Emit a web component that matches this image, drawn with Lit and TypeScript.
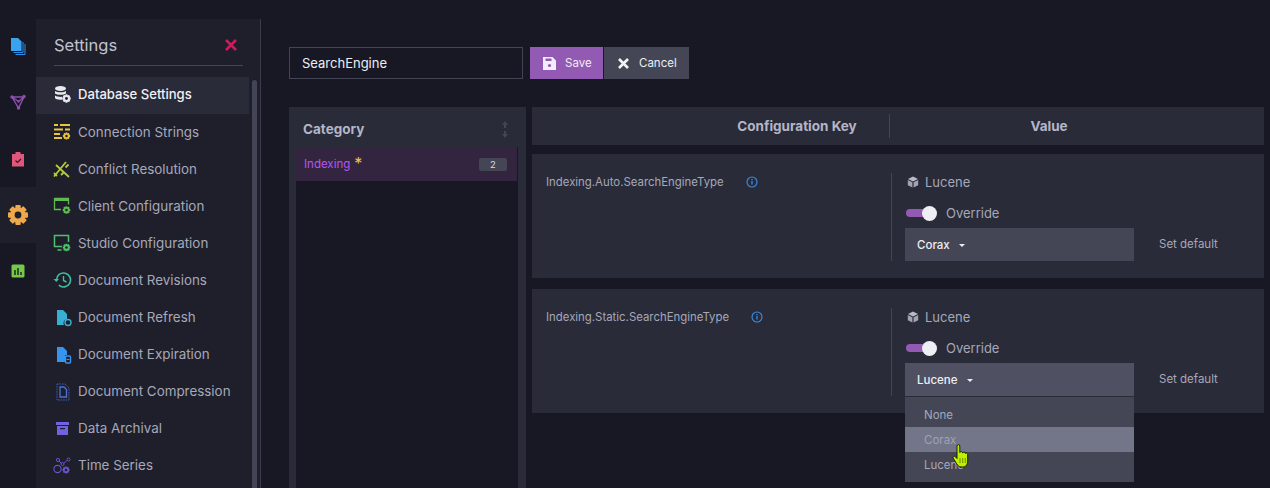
import { LitElement, html, css, svg } from 'lit';
import { customElement } from 'lit/decorators.js';

const gear = (x: number, y: number, r: number, c: string, hole = '#1e1f2b') => svg`
  <g transform="translate(${x} ${y})" fill="${c}">
    <circle r="${r * 0.76}" />
    ${[0, 45, 90, 135].map(
      (a) => svg`<rect x="${-r}" y="${-r * 0.27}" width="${r * 2}" height="${r * 0.54}" rx="${r * 0.1}" transform="rotate(${a})" />`
    )}
    <circle r="${r * 0.34}" fill="${hole}" />
  </g>`;

const railIcons = [
  svg`<path d="M6.500 17.500H16V7M8.500 19.500H18V9" fill="none" stroke="#2f8fe8" stroke-width="1"/><path d="M4 3h7l3.500 3.500V16H4z" fill="#3ba2ef"/>`,
  svg`<path d="M5 6h12l-5.500 11z M5 6l6.500 4.500 M17 6l-5.500 4.500" fill="none" stroke="#8b50ad" stroke-width="1.400"/><circle cx="5" cy="6" r="1.700" fill="#8b50ad"/><circle cx="17" cy="5.500" r="1.700" fill="#8b50ad"/><circle cx="11.500" cy="17" r="1.700" fill="#8b50ad"/><circle cx="11.500" cy="10.500" r="1.200" fill="#8b50ad"/>`,
  svg`<path d="M5 6h3.500V4h5v2H17v12.500H5z" fill="#e0577c"/><path d="M8.500 12.500l2 2 3.500-3.500" fill="none" stroke="#2a1a22" stroke-width="1.100"/>`,
  gear(11, 11, 10, '#efa94d'),
  svg`<rect x="4.500" y="4.500" width="13" height="13" rx="1.500" fill="#76c84a"/><path d="M8 10v5M11 8v7M14 12v3" stroke="#1e2a16" stroke-width="1.500"/>`,
];

const menu = [
  ['Database Settings', svg`<ellipse cx="7.500" cy="3.500" rx="5.500" ry="2.500" fill="#e8e8ee"/><path d="M2 6c2 1.800 9 1.800 11 0v2.500c-2 1.800-9 1.800-11 0zM2 10.500c2 1.500 6 1.500 7 1.300L9.500 14.500c-3 .5-7 0-7.500-1.500z" fill="#e8e8ee"/>${gear(13.500, 13.500, 4.200, '#e8e8ee')}`],
  ['Connection Strings', svg`<path d="M1 3h4M7 3h10M1 7.500h9M12 7.500h5M1 12h6M1 16h8" stroke="#e8c53c" stroke-width="1.800"/>${gear(13.500, 14, 3.600, '#e8c53c')}`],
  ['Conflict Resolution', svg`<path d="M1 17.500L13 3M3 6l13 12M11 13l-3 3M1 14l3 3M12.500 8.500l3 -3" stroke="#b5cb3a" stroke-width="1.800" fill="none"/>`],
  ['Client Configuration', svg`<path d="M1.500 2.500h14v6M1.500 2.500V13.500H8" fill="none" stroke="#5fbb4f" stroke-width="1.300"/><rect x="1" y="2" width="15" height="3" fill="#5fbb4f"/>${gear(13.500, 14, 3.800, '#5fbb4f')}`],
  ['Studio Configuration', svg`<path d="M15.500 9V2.500h-14v11H9" fill="none" stroke="#4cc06a" stroke-width="1.500"/><path d="M4.500 17h4" stroke="#4cc06a" stroke-width="1.500"/>${gear(13.500, 14.500, 3.800, '#4cc06a')}`],
  ['Document Revisions', svg`<path d="M3.500 10a7 7 0 1 1 2.300 5.200" fill="none" stroke="#3dc0a0" stroke-width="1.600"/><path d="M0.500 9h5.500l-2.700 3z" fill="#3dc0a0"/><path d="M10.500 6v4.500l3 1.500" fill="none" stroke="#3dc0a0" stroke-width="1.400"/>`],
  ['Document Refresh', svg`<path d="M4 2h6l4 4v5a4 4 0 0 0-3 6H4z" fill="#3aaed2"/><circle cx="15" cy="14.500" r="3" fill="none" stroke="#3aaed2" stroke-width="1.400"/>`],
  ['Document Expiration', svg`<path d="M4 2h6l4 4v4h-2v7H4z" fill="#3794ef"/><rect x="12.500" y="11" width="5" height="7" rx="1" fill="none" stroke="#3794ef" stroke-width="1.400"/><path d="M13.500 14.500h3" stroke="#3794ef"/>`],
  ['Document Compression', svg`<path d="M4 2h8l4 4v12H4z" fill="none" stroke="#3f62b8" stroke-width="1" stroke-dasharray="1.500 1"/><path d="M7 5h4l2.500 2.500V15H7z" fill="none" stroke="#4a74d8" stroke-width="1.300"/>`],
  ['Data Archival', svg`<rect x="3" y="3" width="13" height="3" fill="#6f63e0"/><path d="M4 7h11v9H4z" fill="#6f63e0"/><rect x="7" y="9" width="5" height="1.200" fill="#1e1f2b"/>`],
  ['Time Series', svg`<circle cx="4.500" cy="13" r="3.600" fill="none" stroke="#6a52c8" stroke-width="1.100"/><path d="M6 5l2.500 2.500M11 7l3-2.500" fill="none" stroke="#6a52c8" stroke-width="1"/><circle cx="5" cy="4" r="1.600" fill="none" stroke="#6a52c8"/><circle cx="9.500" cy="8" r="1.500" fill="none" stroke="#6a52c8"/><circle cx="15.500" cy="3.500" r="1.500" fill="none" stroke="#6a52c8"/>${gear(13, 14, 3.600, '#6a52c8')}`],
];

const saveIcon = html`<svg width="13" height="13" viewBox="0 0 13 13"><path d="M0 0h9.500L13 3.500V13H0z" fill="#f3edf7"/><rect x="2.500" y="1.500" width="6" height="2.500" fill="#935ab3"/><circle cx="6.500" cy="8.500" r="1.600" fill="#935ab3"/></svg>`;
const cancelIcon = html`<svg width="13" height="13" viewBox="0 0 13 13"><path d="M2 2l9 9M11 2l-9 9" stroke="#f3f3f6" stroke-width="2.600" /></svg>`;
const closeIcon = html`<svg width="12" height="12" viewBox="0 0 12 12"><path d="M1 1l10 10M11 1L1 11" stroke="#d01a5c" stroke-width="2.600" /></svg>`;
const infoIcon = html`<svg width="12" height="12" viewBox="0 0 12 12"><circle cx="6" cy="6" r="5" fill="none" stroke="#3b8fe8" stroke-width="1.100" /><path d="M6 5v3.600M6 3v1.200" stroke="#3b8fe8" stroke-width="1.200" /></svg>`;
const cubeIcon = html`<svg width="12" height="12" viewBox="0 0 12 12"><path d="M6 0.500l5 2.400L6 5.400 1 2.900z" fill="#b9bac6" /><path d="M0.800 4l4.600 2.300v5.200L0.800 9.200zM11.200 4L6.600 6.300v5.200l4.600-2.300z" fill="#a2a3b0" /></svg>`;
const sortIcon = html`<svg width="8" height="17" viewBox="0 0 8 17"><path d="M4 0l3 4H5v3H3V4H1zM4 17l3-4H5v-3H3v3H1z" fill="#444654" /></svg>`;
const handCursor = html`<svg width="18" height="24" viewBox="0 0 18 24"><path d="M5 2c0-1.800 2.800-1.800 2.800 0v6.500c.4-1.300 2.700-1.200 2.800.3.600-1.100 2.600-.8 2.700.6.700-.8 2.400-.4 2.400 1V17c0 3-1.600 6-4.500 6H9c-2.500 0-4-2.500-5.500-5L1.200 14.200c-.7-1.300 1-2.600 2.200-1.400L5 14.500z" fill="#bff000" stroke="#1c2006" stroke-width="1" /><path d="M8 14v5M10.700 14v5M13.300 14v5" stroke="#5b7000" stroke-width=".8" /></svg>`;

@customElement('app-root')
export class AppRoot extends LitElement {
  static styles = css`
    :host {
      display: flex;
      width: 1270px;
      height: 488px;
      overflow: hidden;
      background: #181825;
      color: #a6a8ba;
      font-family: Inter, 'Noto Sans', sans-serif;
    }
    svg {
      display: block;
      flex: none;
    }
    .rail {
      width: 36px;
      flex: none;
      padding-top: 18px;
    }
    .tile {
      height: 56.25px;
      display: flex;
      align-items: center;
      justify-content: center;
    }
    .tile.active {
      background: #1e1f2b;
    }
    .side {
      width: 224px;
      flex: none;
      margin-top: 19px;
      background: #1e1f2b;
      border-right: 1px solid #3b3c4a;
      box-sizing: content-box;
    }
    .side-head {
      margin: 0 17px 0 18px;
      height: 47px;
      border-bottom: 1px solid #444655;
      display: flex;
      align-items: center;
      justify-content: space-between;
      padding: 6px 6px 0 0;
      box-sizing: border-box;
      font-size: 16.500px;
      color: #c2c3d0;
    }
    .side-body {
      display: flex;
      margin-top: 11.400px;
    }
    .items {
      width: 213px;
      flex: none;
    }
    .item {
      height: 37.100px;
      display: flex;
      align-items: center;
      gap: 6px;
      padding: 0 0 3px 17px;
      box-sizing: border-box;
      font-size: 13.400px;
      white-space: nowrap;
    }
    .item.active {
      background: #292b38;
      color: #f0f0f5;
      font-size: 13.100px;
      font-weight: 500;
    }
    .thumb {
      width: 5px;
      margin: 3px 0 0 3px;
      height: 420px;
      border-radius: 3px;
      background: #434556;
    }
    .main {
      flex: 1;
      min-width: 0;
      padding: 47px 6px 0 28px;
    }
    .toolbar {
      display: flex;
      height: 32px;
    }
    .search {
      width: 234px;
      box-sizing: border-box;
      border: 1px solid #434454;
      padding: 0 0 1px 12px;
      display: flex;
      align-items: center;
      font-size: 13px;
      color: #eceef4;
      margin-right: 7px;
    }
    .btn {
      display: flex;
      align-items: center;
      gap: 9px;
      font-size: 11.500px;
      color: #eeeef3;
      padding-left: 13px;
      box-sizing: border-box;
    }
    .btn.save {
      width: 73px;
      background: #935ab3;
      margin-right: 1px;
    }
    .btn.cancel {
      width: 85px;
      background: #444655;
    }
    .content {
      display: flex;
      gap: 6px;
      margin-top: 28px;
    }
    .cat {
      width: 237px;
      flex: none;
      height: 381px;
      background: #292b38;
      padding: 0 8px 0 7px;
      box-sizing: border-box;
    }
    .cat-head {
      height: 40px;
      display: flex;
      align-items: center;
      justify-content: space-between;
      padding: 4px 9px 0 7px;
      box-sizing: border-box;
      font-size: 13.500px;
      font-weight: 700;
      color: #b4b6c8;
    }
    .cat-body {
      height: 341px;
      background: #181825;
    }
    .cat-item {
      height: 34px;
      width: 221px;
      background: #33243f;
      display: flex;
      align-items: center;
      padding: 0 10px 0 8px;
      box-sizing: border-box;
      font-size: 11.500px;
      color: #b258f0;
    }
    .star {
      color: #f0c64a;
      font-size: 16px;
      line-height: 10px;
      margin: -3px 0 0 4px;
    }
    .count {
      margin-left: auto;
      width: 28px;
      height: 13px;
      border-radius: 2px;
      background: #444655;
      color: #d8d9e2;
      font-size: 9.500px;
      display: flex;
      align-items: center;
      justify-content: center;
    }
    .table {
      flex: 1;
      min-width: 0;
    }
    .thead {
      height: 38px;
      background: #292b38;
      display: grid;
      grid-template-columns: 357px 1fr;
      align-items: center;
      font-size: 13.500px;
      font-weight: 700;
      color: #b4b6c8;
      text-align: center;
      margin-bottom: 9px;
      padding-bottom: 1px;
      box-sizing: border-box;
    }
    .thead div:first-child {
      padding-left: 173px;
      box-sizing: border-box;
    }
    .thead div:last-child {
      border-left: 1px solid #444655;
      line-height: 24px;
      padding-right: 56px;
    }
    .card {
      height: 124px;
      background: #292b38;
      display: grid;
      grid-template-columns: 359px 1fr;
      margin-bottom: 11px;
      padding-left: 14px;
      box-sizing: border-box;
    }
    .key {
      display: flex;
      align-items: flex-start;
      gap: 22px;
      padding-top: 21px;
      font-size: 11.400px;
    }
    .key svg {
      margin-top: 1px;
    }
    .val {
      margin: 19px 0 18px -14px;
      border-left: 1px solid #434454;
      padding-left: 13px;
    }
    .current {
      display: flex;
      align-items: center;
      gap: 6px;
      height: 18px;
      padding: 0 0 1px 2px;
      box-sizing: border-box;
      font-size: 13px;
    }
    .toggle {
      display: flex;
      align-items: center;
      gap: 9px;
      margin-top: 13px;
      height: 18px;
      font-size: 13px;
      padding-left: 1px;
    }
    .track {
      width: 31px;
      height: 15px;
      position: relative;
    }
    .track::before {
      content: '';
      position: absolute;
      left: 0;
      right: 4px;
      top: 3px;
      height: 8px;
      border-radius: 4px;
      background: #935ab3;
    }
    .track::after {
      content: '';
      position: absolute;
      right: 0;
      top: 0;
      width: 15px;
      height: 15px;
      border-radius: 50%;
      background: #eeeef5;
    }
    .row {
      display: flex;
      align-items: center;
      margin-top: 6px;
    }
    .select {
      width: 229px;
      height: 33px;
      background: #444655;
      display: flex;
      align-items: center;
      padding-left: 12px;
      gap: 9px;
      box-sizing: border-box;
      font-size: 11.500px;
      font-weight: 500;
      color: #eeeef3;
      position: relative;
    }
    .select.open {
      background: #4f5163;
    }
    .caret {
      border: 3px solid transparent;
      border-top: 3px solid #eeeef3;
      border-bottom: 0;
      margin-top: 1px;
    }
    .reset {
      margin-left: 25px;
      font-size: 11.500px;
      margin-top: -1px;
    }
    .menu {
      position: absolute;
      left: 0;
      top: 34px;
      width: 229px;
      height: 85px;
      padding-top: 5px;
      box-sizing: border-box;
      background: #444655;
      font-size: 11.500px;
      font-weight: 400;
      color: #a6a8ba;
      z-index: 2;
    }
    .menu div {
      height: 25px;
      line-height: 27px;
      padding-left: 19px;
    }
    .menu .hover {
      background: #737588;
      color: #a0a2b4;
    }
    .menu .pointer {
      position: absolute;
      left: 47px;
      top: 47px;
      height: auto;
      padding: 0;
    }
  `;

  private renderCard(name: string, value: string, open: boolean) {
    return html`
      <div class="card">
        <div class="key">${name} ${infoIcon}</div>
        <div class="val">
          <div class="current">${cubeIcon} Lucene</div>
          <div class="toggle"><span class="track"></span> Override</div>
          <div class="row">
            <div class="select ${open ? 'open' : ''}">
              ${value} <span class="caret"></span>
              ${open
                ? html`<div class="menu">
                    <div>None</div>
                    <div class="hover">Corax</div>
                    <div>Lucene</div>
                    <div class="pointer">${handCursor}</div>
                  </div>`
                : ''}
            </div>
            <span class="reset">Set default</span>
          </div>
        </div>
      </div>
    `;
  }

  render() {
    return html`
      <nav class="rail">
        ${railIcons.map(
          (icon, i) => html`<div class="tile ${i === 3 ? 'active' : ''}">
            <svg width="22" height="22" viewBox="0 0 22 22">${icon}</svg>
          </div>`
        )}
      </nav>
      <aside class="side">
        <div class="side-head"><span>Settings</span>${closeIcon}</div>
        <div class="side-body">
          <div class="items">
            ${menu.map(
              ([label, icon], i) => html`<div class="item ${i === 0 ? 'active' : ''}">
                <svg width="19" height="19" viewBox="0 0 19 19">${icon}</svg>
                ${label}
              </div>`
            )}
          </div>
          <div class="thumb"></div>
        </div>
      </aside>
      <main class="main">
        <div class="toolbar">
          <div class="search">SearchEngine</div>
          <div class="btn save">${saveIcon} Save</div>
          <div class="btn cancel">${cancelIcon} Cancel</div>
        </div>
        <div class="content">
          <section class="cat">
            <div class="cat-head">Category ${sortIcon}</div>
            <div class="cat-body">
              <div class="cat-item">Indexing <span class="star">*</span><span class="count">2</span></div>
            </div>
          </section>
          <section class="table">
            <div class="thead">
              <div>Configuration Key</div>
              <div>Value</div>
            </div>
            ${this.renderCard('Indexing.Auto.SearchEngineType', 'Corax', false)}
            ${this.renderCard('Indexing.Static.SearchEngineType', 'Lucene', true)}
          </section>
        </div>
      </main>
    `;
  }
}
